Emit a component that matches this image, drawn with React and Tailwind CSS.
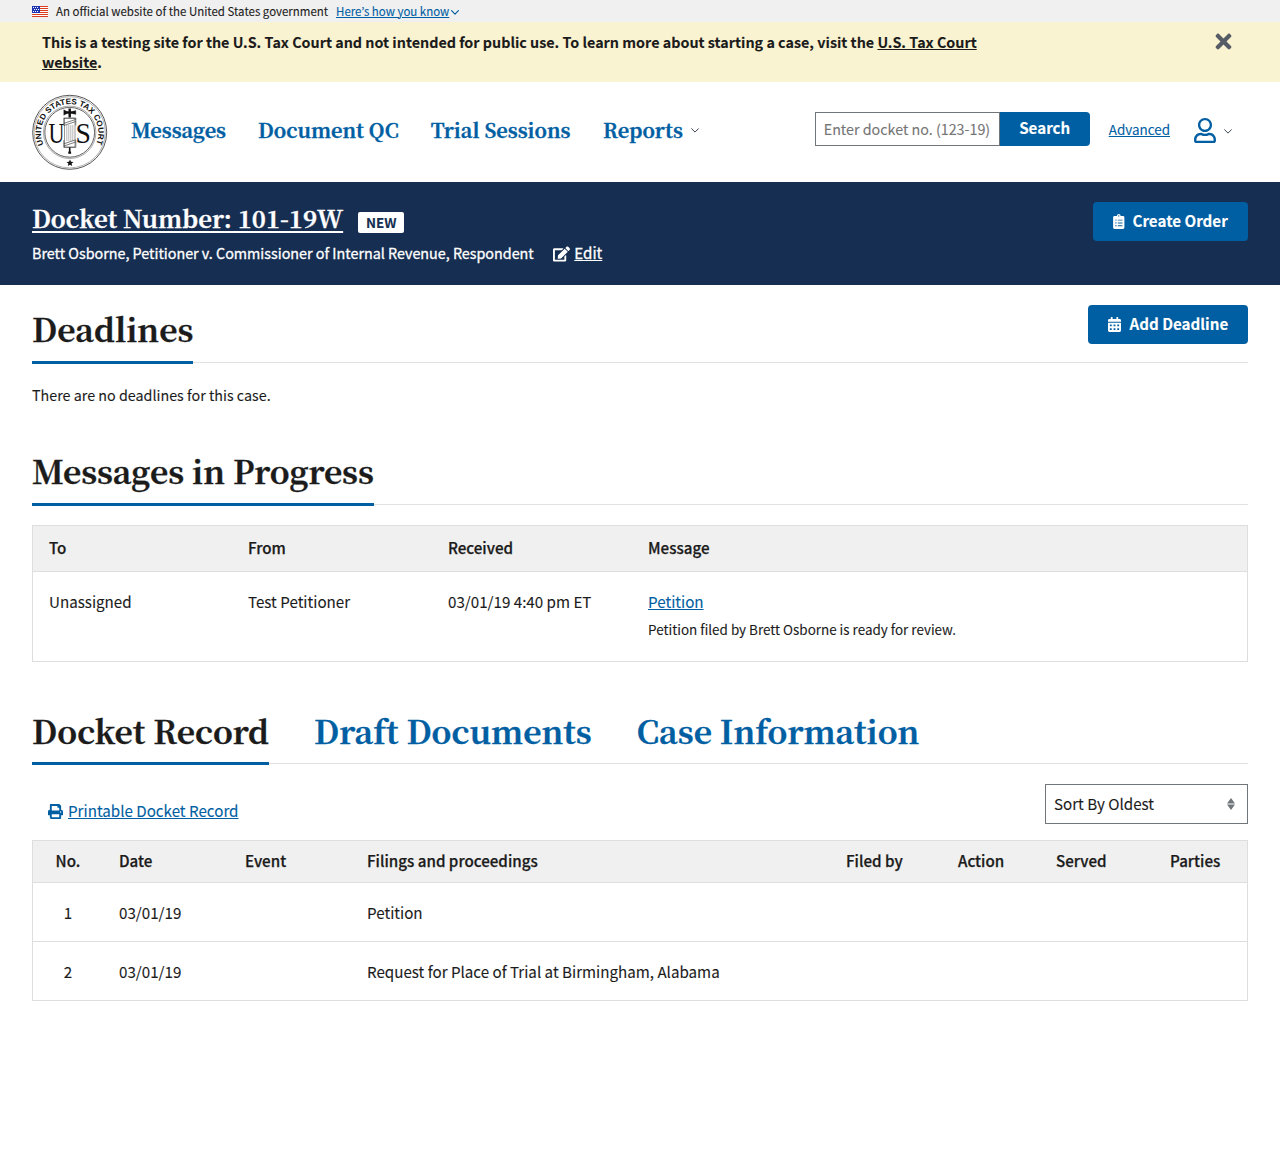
import React from "react";
import { FaClipboardList, FaCalendarAlt, FaEdit, FaPrint, FaRegUser, FaTimes } from "react-icons/fa";

const serif = "font-['Noto_Serif_CJK_SC','Noto_Serif',serif] font-bold [-webkit-text-stroke:0.35px_currentColor]";

function Chevron({ className }) {
  return (
    <svg viewBox="0 0 8 5" className={className} fill="none" stroke="currentColor" strokeLinecap="round" strokeLinejoin="round">
      <path d="M0.6 0.7 4 4.1 7.4 0.7" />
    </svg>
  );
}

function Flag() {
  return (
    <svg viewBox="0 0 16 11" className="h-[11px] w-4" shapeRendering="crispEdges">
      <rect width="16" height="11" fill="#fff" />
      {[0, 2, 4, 6, 8, 10].map((y) => (
        <rect key={y} y={y} width="16" height="1" fill="#db3e1f" />
      ))}
      <rect width="8" height="7" fill="#1e33b1" />
      {[1, 3, 5].flatMap((y) =>
        [1, 3, 5].map((x) => <rect key={`${x}-${y}`} x={x + (y === 3 ? 1 : 0)} y={y} width="1" height="1" fill="#fff" />)
      )}
    </svg>
  );
}

function Seal() {
  return (
    <svg viewBox="0 0 76 76" className="h-[76px] w-[76px]" fill="none" stroke="#222">
      <defs>
        <path id="ring" d="M11.6 50.5 A28.6 28.6 0 1 1 63.8 50.5" />
      </defs>
      <circle cx="37.7" cy="38.3" r="37" strokeWidth="0.9" stroke="#444" />
      <circle cx="37.7" cy="38.3" r="35.6" strokeWidth="0.5" stroke="#666" />
      <circle cx="37.7" cy="38.3" r="26.2" strokeWidth="0.5" stroke="#555" />
      <circle cx="37.7" cy="38.3" r="24.9" strokeWidth="0.7" />
      <text className="font-['Liberation_Sans',sans-serif] text-[8px] font-bold" fill="#111" stroke="none">
        <textPath href="#ring" textLength="113" lengthAdjust="spacingAndGlyphs">UNITED STATES TAX COURT</textPath>
      </text>
      <g className="font-['Liberation_Serif',serif] text-[29px]" fill="#111" stroke="none">
        <text x="16.4" y="48.5" textLength="16" lengthAdjust="spacingAndGlyphs">U</text>
        <text x="43.6" y="48.5" textLength="15.4" lengthAdjust="spacingAndGlyphs">S</text>
      </g>
      <path d="M37.7 14.6v9M33 18.5h9.8" strokeWidth="2.4" stroke="#111" />
      <path d="M31.8 15.8v5.4l3-1.6v-2.2zM43.8 16.6l-3 .8v2.2l3 .8z" fill="#111" strokeWidth="0.4" />
      <path d="M37.7 52v7" strokeWidth="1.6" stroke="#111" />
      <rect x="32.6" y="24.5" width="10.4" height="28.5" fill="#fff" strokeWidth="0.6" stroke="#555" />
      <path d="M34.8 31v16M36.8 31v16M38.8 31v16M40.8 31v16" strokeWidth="0.6" stroke="#888" />
      <path d="M31.8 29.4l12-4M31.8 31.5l12-4M31.8 24h12M31.8 24v7.5M43.8 24v7.5M31.8 52l12-4M31.8 49.8l12-4M31.8 53.4h12M31.8 46.2v7.2M43.8 46.2v7.2" strokeWidth="0.7" stroke="#444" />
      <path d="M37.7 57.6v2.2" strokeWidth="2.8" stroke="#111" />
      <path d="M38 65.4l1 2.3 2.5.2-1.9 1.7.6 2.4-2.2-1.3-2.2 1.3.6-2.4-1.9-1.7 2.5-.2z" fill="#111" stroke="none" />
    </svg>
  );
}

function SectionHeading({ children }) {
  return (
    <h2 className={`${serif} -mb-[2px] h-[59px] border-b-[3px] border-[#005ea2] text-[31.88px] leading-[46px]`}>{children}</h2>
  );
}

const btn = "flex items-center rounded-[4px] bg-[#005ea2] text-[15.17px] font-bold text-white";

const messageCols = "grid grid-cols-[199px_200px_200px_1fr]";
const docketCols = "grid grid-cols-[70px_126px_122px_479px_112px_98px_114px_1fr]";
const tab = `${serif} -mb-[2px] h-[59px] text-[31.88px] leading-[48px]`;

export default function App() {
  return (
    <div className="min-h-[1163px] w-[1280px] bg-white font-['Noto_Sans_CJK_KR','Noto_Sans',sans-serif] text-[15.17px] leading-6 text-[#1b1b1b] [-webkit-text-stroke:0.1px_currentColor]">
      <div className="flex h-[22px] items-center bg-[#f0f0f0] pl-8 text-[11.47px] leading-4">
        <Flag />
        <span className="-mt-px ml-2">An official website of the United States government</span>
        <a className="-mt-px ml-2 text-[#005ea2] underline underline-offset-1">Here’s how you know</a>
        <Chevron className="ml-[2px] mt-[2px] h-[5px] w-[8px] text-[#005ea2] stroke-[1.2]" />
      </div>

      <div className="flex h-[60px] justify-between bg-[#faf3d1] pl-[42px] pr-[48px] pt-[10px]">
        <p className="w-[960px] text-[14.33px] font-bold leading-5">
          This is a testing site for the U.S. Tax Court and not intended for public use. To learn more about starting a case, visit the{" "}
          <a className="underline underline-offset-1">U.S. Tax Court website</a>.
        </p>
        <FaTimes className="-mt-[2px] h-[23px] w-[17px] text-[#565c65]" />
      </div>

      <header className="flex h-[100px] items-center pl-8 pr-12">
        <Seal />
        <nav className={`${serif} -mt-1 ml-[23px] flex items-center text-[19.93px] leading-6 text-[#005ea2]`}>
          <a>Messages</a>
          <a className="ml-8">Document QC</a>
          <a className="ml-8">Trial Sessions</a>
          <a className="ml-[32.5px] flex items-center">
            Reports
            <Chevron className="ml-[8.5px] h-[5px] w-[8px] text-[#3d4551]" />
          </a>
        </nav>
        <div className="ml-auto flex items-center">
          <input
            className="-mt-[6px] h-[34px] w-[185px] border border-[#71767a] px-2 pb-[2px] text-[14.3px] placeholder:text-[#757575]"
            placeholder="Enter docket no. (123-19)"
          />
          <button className="-mt-[6px] h-[34px] w-[90px] rounded-r-[4px] bg-[#005ea2] pb-[4px] text-[15.17px] font-bold leading-[30px] text-white">
            Search
          </button>
          <a className="-mt-[6px] ml-[19px] text-[13.45px] text-[#005ea2] underline underline-offset-1">Advanced</a>
          <FaRegUser className="-mt-1 ml-6 h-[25px] w-[22px] text-[#005ea2]" />
          <Chevron className="-mt-[2px] ml-2 h-[5px] w-[8px] text-[#3d4551]" />
        </div>
      </header>

      <div className="flex h-[103px] items-start justify-between bg-[#162e51] px-8 pt-5 text-white">
        <div>
          <div className="flex h-9 items-center">
            <a className={`${serif} -mt-1 text-[23.93px] leading-9 underline decoration-2 underline-offset-[3px]`}>Docket Number: 101-19W</a>
            <span className="ml-[15px] mt-[5px] flex h-[21px] w-[46px] items-center justify-center rounded-[2px] bg-white pb-[2px] text-[13.4px] font-bold text-[#162e51]">
              NEW
            </span>
          </div>
          <div className="mt-[3px] flex items-center text-[14.34px] leading-6 [-webkit-text-stroke:0.3px_currentColor]">
            <span>Brett Osborne, Petitioner v. Commissioner of Internal Revenue, Respondent</span>
            <FaEdit className="ml-[19px] mt-[2px] h-4 w-[17px]" strokeWidth="0" />
            <a className="-mt-[2px] ml-[4.5px] text-[15.17px] underline underline-offset-1">Edit</a>
          </div>
        </div>
        <button className={`${btn} h-[39px] w-[155px] pl-5`}>
          <FaClipboardList className="mr-2 h-[15px] w-[11.5px]" />
          <span className="-mt-[3px]">Create Order</span>
        </button>
      </div>

      <main className="px-8">
        <div className="flex h-[78px] items-end justify-between border-b border-[#dfe1e2]">
          <SectionHeading>Deadlines</SectionHeading>
          <button className={`${btn} mb-[18px] h-[39px] w-[160px] pl-5`}>
            <FaCalendarAlt className="mr-[8.5px] h-[15px] w-[13px]" />
            <span className="-mt-[3px]">Add Deadline</span>
          </button>
        </div>
        <p className="mt-5 text-[14.32px] leading-6">There are no deadlines for this case.</p>

        <div className="mt-[38px] flex h-[60px] items-end border-b border-[#dfe1e2]">
          <SectionHeading>Messages in Progress</SectionHeading>
        </div>

        <div className="mt-5 h-[137px] border border-[#dcdee0]">
          <div className={`${messageCols} h-[46px] items-center border-b border-[#dcdee0] bg-[#f0f0f0] pb-[3px] pl-4 font-medium [-webkit-text-stroke:0.25px_currentColor]`}>
            <span>To</span>
            <span>From</span>
            <span>Received</span>
            <span>Message</span>
          </div>
          <div className={`${messageCols} pl-4 pt-[17px]`}>
            <span>Unassigned</span>
            <span>Test Petitioner</span>
            <span>03/01/19 4:40 pm ET</span>
            <div>
              <a className="text-[#005ea2] underline underline-offset-1">Petition</a>
              <p className="mt-1 text-[13.43px]">Petition filed by Brett Osborne is ready for review.</p>
            </div>
          </div>
        </div>

        <div className="mt-[42px] flex h-[60px] items-end border-b border-[#dfe1e2]">
          <h2 className={`${tab} border-b-[3px] border-[#005ea2]`}>Docket Record</h2>
          <a className={`${tab} ml-[45px] text-[#005ea2]`}>Draft Documents</a>
          <a className={`${tab} ml-[45px] text-[#005ea2]`}>Case Information</a>
        </div>

        <div className="mt-5 flex justify-between">
          <a className="ml-4 mt-[14px] flex h-6 items-center text-[#005ea2]">
            <FaPrint className="mr-[5px] mt-[2px] h-[15px] w-[15px]" />
            <span className="underline underline-offset-1">Printable Docket Record</span>
          </a>
          <div className="flex h-10 w-[203px] items-center justify-between border border-[#71767a] pl-2 pr-3">
            <span className="-mt-[2px]">Sort By Oldest</span>
            <svg viewBox="0 0 8 12" className="h-3 w-2 -mt-px" fill="#71767a">
              <path d="M4 0l4 5.4H0zM0 6.6h8L4 12z" />
            </svg>
          </div>
        </div>

        <div className="mt-4 h-[161px] border border-[#dcdee0]">
          <div className={`${docketCols} h-[42px] items-center border-b border-[#dcdee0] bg-[#f0f0f0] pb-[3px] font-medium [-webkit-text-stroke:0.25px_currentColor]`}>
            <span className="text-center">No.</span>
            <span className="pl-4">Date</span>
            <span className="pl-4">Event</span>
            <span className="pl-4">Filings and proceedings</span>
            <span className="pl-4">Filed by</span>
            <span className="pl-4">Action</span>
            <span className="pl-4">Served</span>
            <span className="pl-4">Parties</span>
          </div>
          <div className={`${docketCols} h-[59px] items-center border-b border-[#dcdee0]`}>
            <span className="text-center">1</span>
            <span className="pl-4">03/01/19</span>
            <span />
            <span className="pl-4">Petition</span>
          </div>
          <div className={`${docketCols} h-[58px] items-center`}>
            <span className="text-center">2</span>
            <span className="pl-4">03/01/19</span>
            <span />
            <span className="pl-4">Request for Place of Trial at Birmingham, Alabama</span>
          </div>
        </div>
      </main>
    </div>
  );
}
